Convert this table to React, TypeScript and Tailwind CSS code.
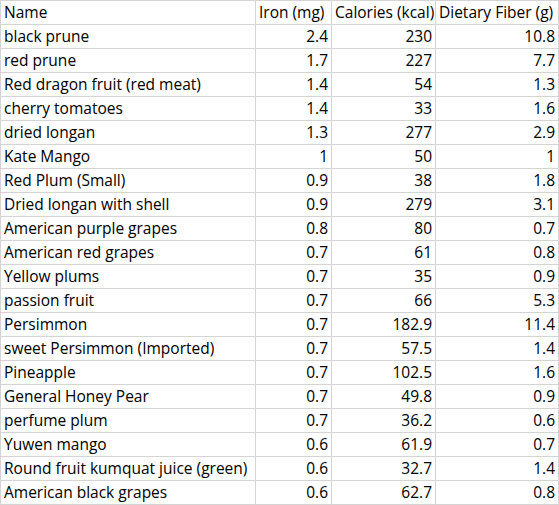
const rows: [string, string, string, string][] = [
  ['black prune', '2.4', '230', '10.8'],
  ['red prune', '1.7', '227', '7.7'],
  ['Red dragon fruit (red meat)', '1.4', '54', '1.3'],
  ['cherry tomatoes', '1.4', '33', '1.6'],
  ['dried longan', '1.3', '277', '2.9'],
  ['Kate Mango', '1', '50', '1'],
  ['Red Plum (Small)', '0.9', '38', '1.8'],
  ['Dried longan with shell', '0.9', '279', '3.1'],
  ['American purple grapes', '0.8', '80', '0.7'],
  ['American red grapes', '0.7', '61', '0.8'],
  ['Yellow plums', '0.7', '35', '0.9'],
  ['passion fruit', '0.7', '66', '5.3'],
  ['Persimmon', '0.7', '182.9', '11.4'],
  ['sweet Persimmon (Imported)', '0.7', '57.5', '1.4'],
  ['Pineapple', '0.7', '102.5', '1.6'],
  ['General Honey Pear', '0.7', '49.8', '0.9'],
  ['perfume plum', '0.7', '36.2', '0.6'],
  ['Yuwen mango', '0.6', '61.9', '0.7'],
  ['Round fruit kumquat juice (green)', '0.6', '32.7', '1.4'],
  ['American black grapes', '0.6', '62.7', '0.8'],
]

const cell = 'h-[24px] border-l border-t border-[#d4d4d4] flex items-center overflow-hidden whitespace-nowrap'

export default function App() {
  return (
    <div className="w-[559px] h-[505px] bg-white">
      <div
        className="grid grid-cols-[255px_76px_104px_123px] border-r border-b border-[#d4d4d4] text-[15.5px] text-black leading-none"
        style={{ fontFamily: '"Open Sans", "Liberation Sans", sans-serif' }}
      >
        <div className={`${cell} pl-[3px]`}>Name</div>
        <div className={`${cell} pl-[3px]`}>Iron (mg)</div>
        <div className={`${cell} pl-[3px]`}>Calories (kcal)</div>
        <div className={`${cell} pl-[3px]`}>Dietary Fiber (g)</div>
        {rows.map((r) => (
          <>
            <div key={r[0]} className={`${cell} pl-[3px]`}>{r[0]}</div>
            <div className={`${cell} justify-end pr-[3px]`}>{r[1]}</div>
            <div className={`${cell} justify-end pr-[3px]`}>{r[2]}</div>
            <div className={`${cell} justify-end pr-[3px]`}>{r[3]}</div>
          </>
        ))}
      </div>
    </div>
  )
}
